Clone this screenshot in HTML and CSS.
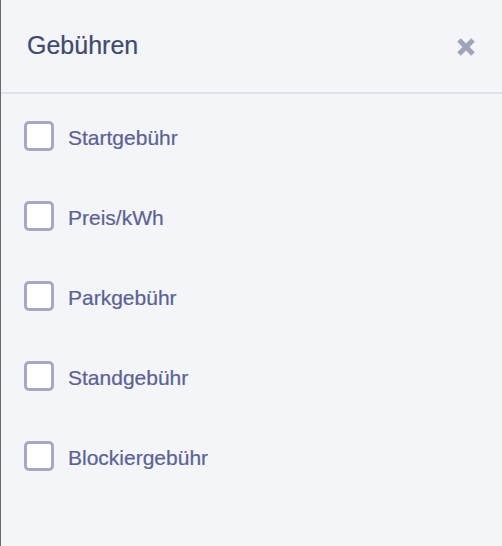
FILE: index.html
```html
<!DOCTYPE html>
<html lang="de">
<head>
<meta charset="UTF-8">
<link rel="stylesheet" href="styles.css">
</head>
<body>
<div class="panel">
    <div class="panel-header">
        <h2 class="panel-title">Gebühren</h2>
        <button class="close-btn" aria-label="Schließen">
            <svg width="20" height="20" viewBox="0 0 20 20">
                <path d="M3 3L17 17M17 3L3 17" stroke="#a0a4b8" stroke-width="5" fill="none"/>
            </svg>
        </button>
    </div>

    <div class="fee-list">
        <label class="fee-item"><input type="checkbox"><span>Startgebühr</span></label>
        <label class="fee-item"><input type="checkbox"><span>Preis/kWh</span></label>
        <label class="fee-item"><input type="checkbox"><span>Parkgebühr</span></label>
        <label class="fee-item"><input type="checkbox"><span>Standgebühr</span></label>
        <label class="fee-item"><input type="checkbox"><span>Blockiergebühr</span></label>
    </div>
</div>
</body>
</html>
```

FILE: styles.css
```css
body {
margin: 0;
padding: 0;
background-color: #f4f5f8;
font-family: Helvetica, "Liberation Sans", Arial, sans-serif;
}

.panel {
height: 546px;
box-sizing: border-box;
border-left: 1px solid #6a6a6a;
}

.panel-header {
display: flex;
align-items: center;
justify-content: space-between;
height: 94px;
padding: 0 26px 1px 26px;
box-sizing: border-box;
border-bottom: 2px solid #dde2ee;
}

.panel-title {
margin: 0;
font-size: 25px;
font-weight: normal;
color: #414a6f;
-webkit-text-stroke: 0.2px #414a6f;
}

.close-btn {
display: flex;
padding: 0;
margin-top: 3px;
background: none;
border: none;
cursor: pointer;
}

.fee-list {
display: flex;
flex-direction: column;
gap: 50px;
padding: 27px 0 0 23px;
}

.fee-item {
display: flex;
align-items: center;
gap: 14px;
height: 30px;
font-size: 21px;
color: #5b6293;
-webkit-text-stroke: 0.2px #5b6293;
cursor: pointer;
}

.fee-item input[type="checkbox"] {
appearance: none;
-webkit-appearance: none;
margin: 0;
width: 30px;
height: 30px;
box-sizing: border-box;
border: 3px solid #a4a9c6;
border-radius: 5px;
background-color: #fff;
}

.fee-item span {
padding-top: 4px;
}
```
